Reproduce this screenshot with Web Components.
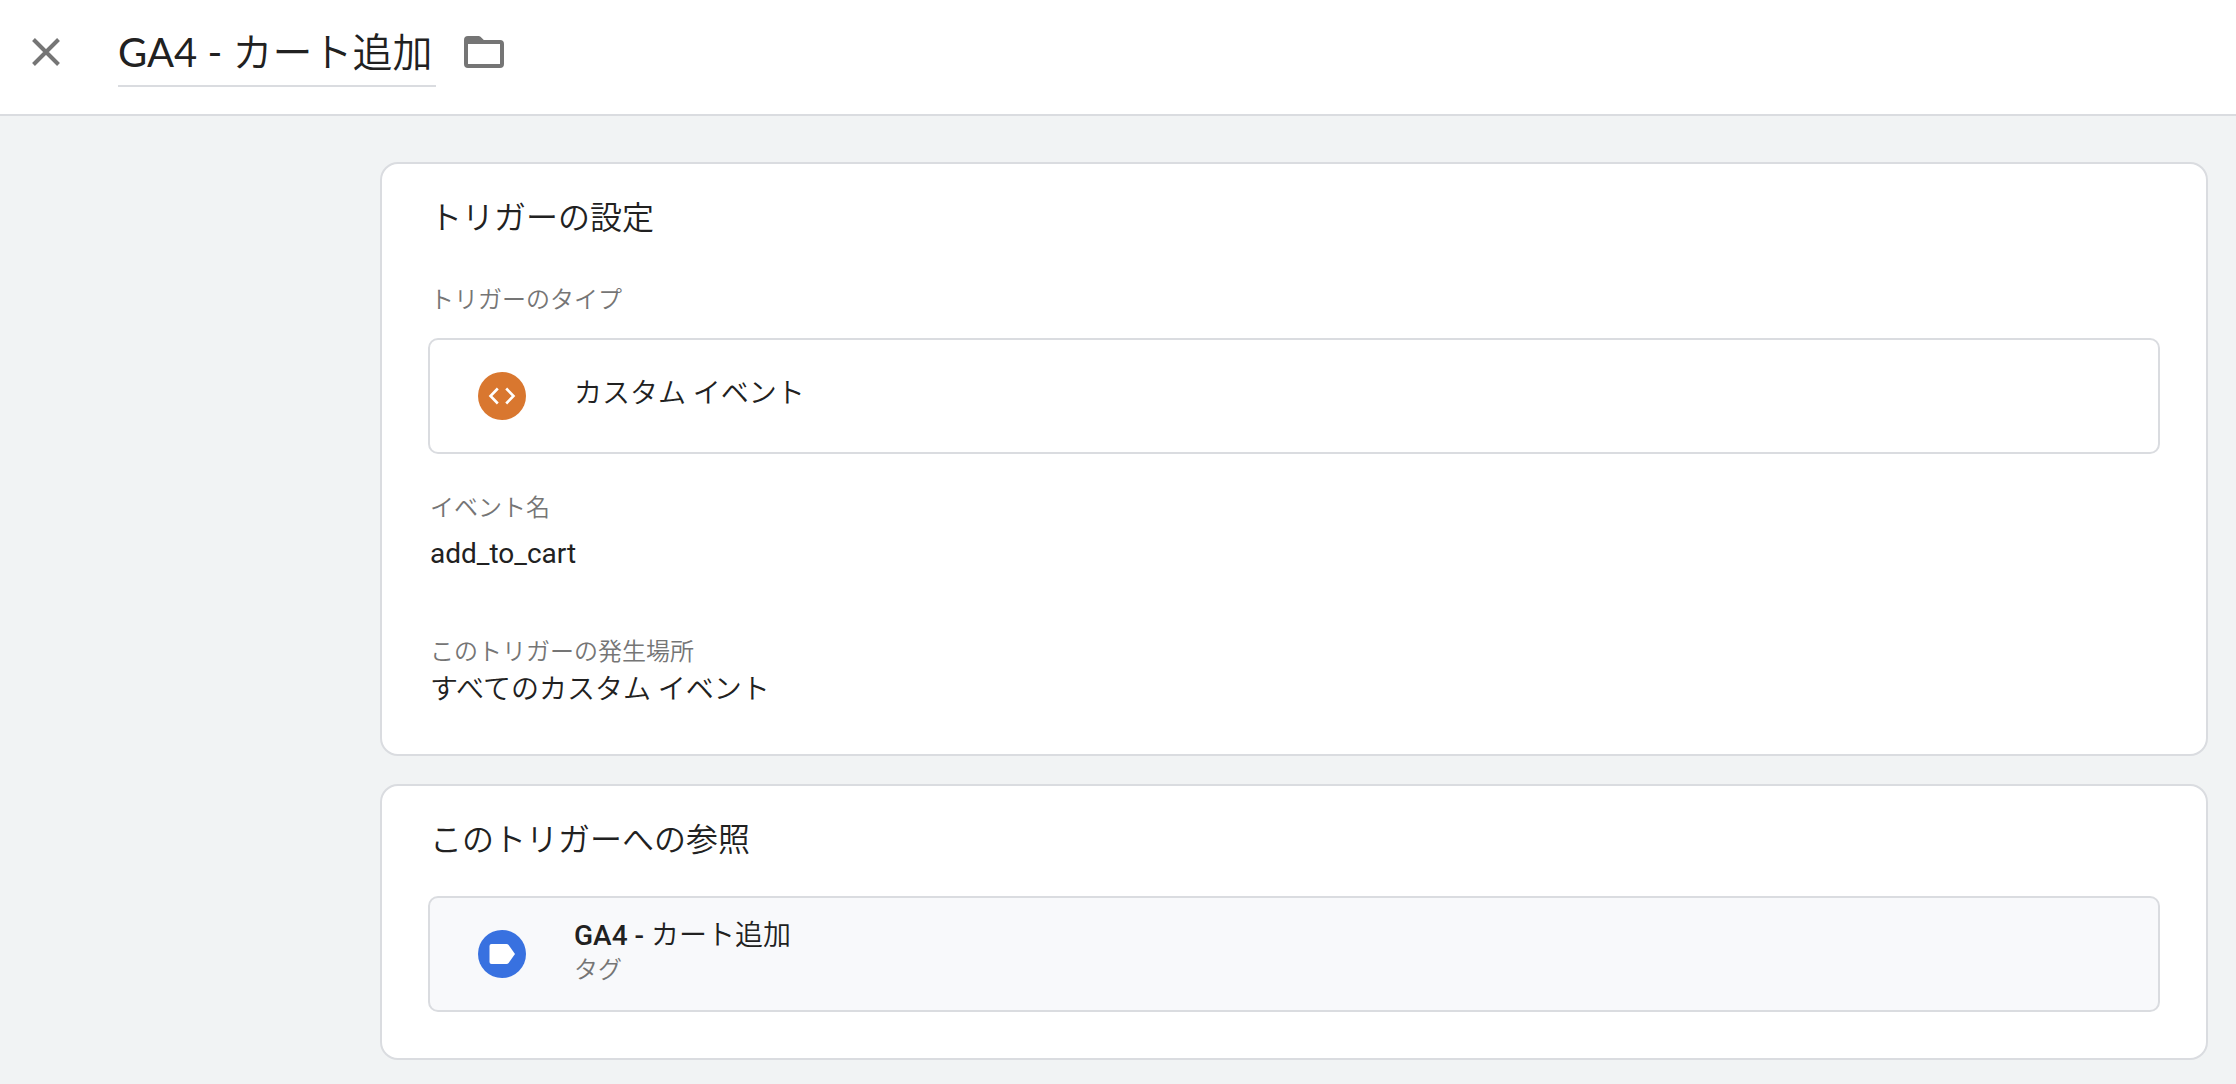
<!DOCTYPE html>
<html lang="ja">
<head>
<meta charset="utf-8">
<meta name="viewport" content="width=device-width, initial-scale=1">
<title>GA4 - カート追加</title>
<style>
  html, body { margin: 0; min-height: 100%; background: #f1f3f4; }
  body {
    --ink: #212121;
    --muted: #757575;
    --line: #dadce0;
    color: var(--ink);
    font-family: Roboto, "Noto Sans CJK JP DemiLight", "Noto Sans CJK JP", sans-serif;
    font-size: 28px;
    line-height: 36px;
    font-weight: 350;
  }
</style>
</head>
<body>
<trigger-page></trigger-page>
<script>
const define = (name, html) => {
  const template = document.createElement('template');
  template.innerHTML = '<style>:host{display:block;box-sizing:border-box}*{box-sizing:border-box}</style>' + html;
  customElements.define(name, class extends HTMLElement {
    constructor() {
      super();
      this.attachShadow({ mode: 'open' }).append(template.content.cloneNode(true));
    }
  });
};

define('sheet-header', `
  <style>
    :host { display: flex; align-items: flex-start; height: 116px; padding: 16px 24px; background: #fff; border-bottom: 2px solid var(--line); }
    button { display: flex; align-items: center; justify-content: center; padding: 0; border: 0; background: none; color: var(--muted); cursor: pointer; }
    .close { width: 44px; height: 72px; margin-right: 50px; }
    .folder { width: 48px; height: 72px; margin-left: 24px; }
    input { field-sizing: content; min-width: 318px; height: 71px; padding: 0 0 2px; border: 0; border-bottom: 2px solid var(--line); outline: 0; background: none; color: var(--ink);
      font: 400 40px/66px Lato, "Noto Sans CJK JP DemiLight", "Noto Sans CJK JP", sans-serif; }
  </style>
  <button class="close" aria-label="閉じる"><svg width="28" height="28" viewBox="0 0 28 28" fill="none" stroke="currentColor" stroke-width="4"><path d="M1.500 1.500 26.500 26.500M26.500 1.500 1.500 26.500"/></svg></button>
  <input type="text" aria-label="トリガー名" value="GA4 - カート追加">
  <button class="folder" aria-label="フォルダ"><svg width="40" height="32" viewBox="0 0 40 32" fill="currentColor"><path fill-rule="evenodd" d="M4 0H14.500Q15.700 0 16.500.8L19.800 4H36Q40 4 40 8V28Q40 32 36 32H4Q0 32 0 28V4Q0 0 4 0ZM4 8V28H36V8Z"/></svg></button>
`);

define('info-card', `
  <style>
    :host { padding: 32px 46px 46px; background: #fff; border: 2px solid var(--line); border-radius: 18px; }
    h2 { margin: 0; padding-left: 2px; font-size: 32px; line-height: 44px; font-weight: inherit; }
  </style>
  <h2><slot name="heading"></slot></h2>
  <slot></slot>
`);

define('labeled-field', `
  <style>
    :host { padding-left: 2px; }
    .label { color: var(--muted); font-size: 24px; line-height: 32px; }
    .value { margin-top: var(--value-gap, 4px); }
  </style>
  <div class="label"><slot name="label"></slot></div>
  <div class="value"><slot></slot></div>
`);

define('type-icon', `
  <style>
    :host { display: flex; align-items: center; justify-content: center; flex: none; width: 48px; height: 48px; border-radius: 50%; background: var(--icon-bg); color: #fff; }
    ::slotted(svg) { display: block; }
  </style>
  <slot></slot>
`);

const rowStyle = `
  .row { display: flex; align-items: center; gap: 48px; width: 100%; height: 116px; padding: 0 48px; border: 2px solid var(--line); border-radius: 10px; background: none; color: inherit; font: inherit; text-align: left; }
  button.row { background: #f8f9fb; cursor: pointer; }
  .text { display: flex; flex-direction: column; padding-bottom: 4px; }
  .sub { color: var(--muted); font-size: 24px; line-height: 32px; }
`;

define('type-row', `
  <style>${rowStyle}</style>
  <div class="row"><slot name="icon"></slot><span class="text"><slot></slot></span></div>
`);

define('reference-row', `
  <style>${rowStyle}</style>
  <button class="row"><slot name="icon"></slot><span class="text"><span><slot></slot></span><span class="sub"><slot name="sub"></slot></span></span></button>
`);

define('trigger-page', `
  <style>
    main { display: flex; flex-direction: column; gap: 28px; padding: 46px 28px 24px 380px; }
    .type-label { margin: 44px 0 22px; padding-left: 2px; color: var(--muted); font-size: 24px; line-height: 32px; }
    .event { margin-top: 38px; --value-gap: 12px; }
    .scope { margin-top: 64px; }
    reference-row { margin-top: 34px; }
    .code { font-weight: 400; }
    .latin { font-weight: 500; }
    .custom { --icon-bg: #d9772f; }
    .tag { --icon-bg: #3871e0; }
  </style>
  <sheet-header></sheet-header>
  <main>
    <info-card>
      <span slot="heading">トリガーの設定</span>
      <div class="type-label">トリガーのタイプ</div>
      <type-row>
        <type-icon slot="icon" class="custom"><svg width="28" height="20" viewBox="0 0 28 20" fill="none" stroke="#fff" stroke-width="2.600"><path d="M9.800 2.500 2.500 10 9.800 17.500M18.200 2.500 25.500 10 18.200 17.500"/></svg></type-icon>
        カスタム イベント
      </type-row>
      <labeled-field class="event"><span slot="label">イベント名</span><span class="code">add_to_cart</span></labeled-field>
      <labeled-field class="scope"><span slot="label">このトリガーの発生場所</span>すべてのカスタム イベント</labeled-field>
    </info-card>
    <info-card>
      <span slot="heading">このトリガーへの参照</span>
      <reference-row>
        <type-icon slot="icon" class="tag"><svg width="26" height="20" viewBox="0 0 26 20" fill="#fff"><path d="M2.500 0H17.500Q18.800 0 19.600 1L26 10 19.600 19Q18.800 20 17.500 20H2.500Q.500 20 .500 18V2Q.500 0 2.500 0Z"/></svg></type-icon>
        <span class="latin">GA4 - </span>カート追加
        <span slot="sub">タグ</span>
      </reference-row>
    </info-card>
  </main>
`);
</script>
</body>
</html>
